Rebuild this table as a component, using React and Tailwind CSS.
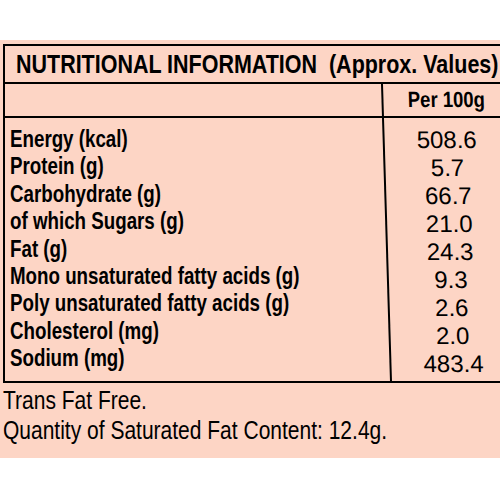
import React from "react";

const sans = '"Liberation Sans", Arial, sans-serif';

const rows = [
  ["Energy (kcal)", "508.6"],
  ["Protein (g)", "5.7"],
  ["Carbohydrate (g)", "66.7"],
  ["of which Sugars (g)", "21.0"],
  ["Fat (g)", "24.3"],
  ["Mono unsaturated fatty acids (g)", "9.3"],
  ["Poly unsaturated fatty acids (g)", "2.6"],
  ["Cholesterol (mg)", "2.0"],
  ["Sodium (mg)", "483.4"],
];

export default function App() {
  return (
    <div
      className="w-[500px] h-[500px] bg-white overflow-hidden text-black"
      style={{ fontFamily: sans }}
    >
      <div className="h-10" />
      <div className="h-[418px] bg-[#fdd5c5] pt-1 pl-[3px] overflow-hidden">
        <div className="border-l-2 border-t-2 border-black">
          <div className="h-[38px] border-b-2 border-black pl-[11px]">
            <div className="w-max origin-left scale-x-[0.826] text-[26px] leading-[36px] font-bold whitespace-pre">
              {"NUTRITIONAL INFORMATION  (Approx. Values)"}
            </div>
          </div>
          <div className="flex h-[34px] border-b-2 border-black">
            <div className="w-[376px]" />
            <div className="flex-1 flex justify-center pl-[9px] border-l-2 border-black skew-x-[1.7deg] origin-top">
              <div className="w-max scale-x-[0.84] text-[22px] leading-[32px] font-bold whitespace-nowrap">
                Per 100g
              </div>
            </div>
          </div>
          <div className="flex h-[265px] border-b-2 border-black">
            <div className="w-[377px] pt-[8px] pl-[5px] text-[23px] leading-[27.4px] font-bold">
              {rows.map(([l]) => (
                <div
                  key={l}
                  className="w-max origin-left scale-x-[0.815] whitespace-nowrap"
                >
                  {l}
                </div>
              ))}
            </div>
            <div className="flex-1 pt-[8px] pl-[8px] border-l-2 border-black skew-x-[1.74deg] origin-top text-center text-[24px] leading-[28px]">
              {rows.map(([l, v]) => (
                <div key={l}>{v}</div>
              ))}
            </div>
          </div>
        </div>
        <div className="mt-[2px] text-[25px] leading-[30px]">
          <div className="w-max origin-left scale-x-[0.84] whitespace-nowrap">
            Trans Fat Free.
          </div>
          <div className="w-max origin-left scale-x-[0.84] whitespace-nowrap">
            Quantity of Saturated Fat Content: 12.4g.
          </div>
        </div>
      </div>
    </div>
  );
}
